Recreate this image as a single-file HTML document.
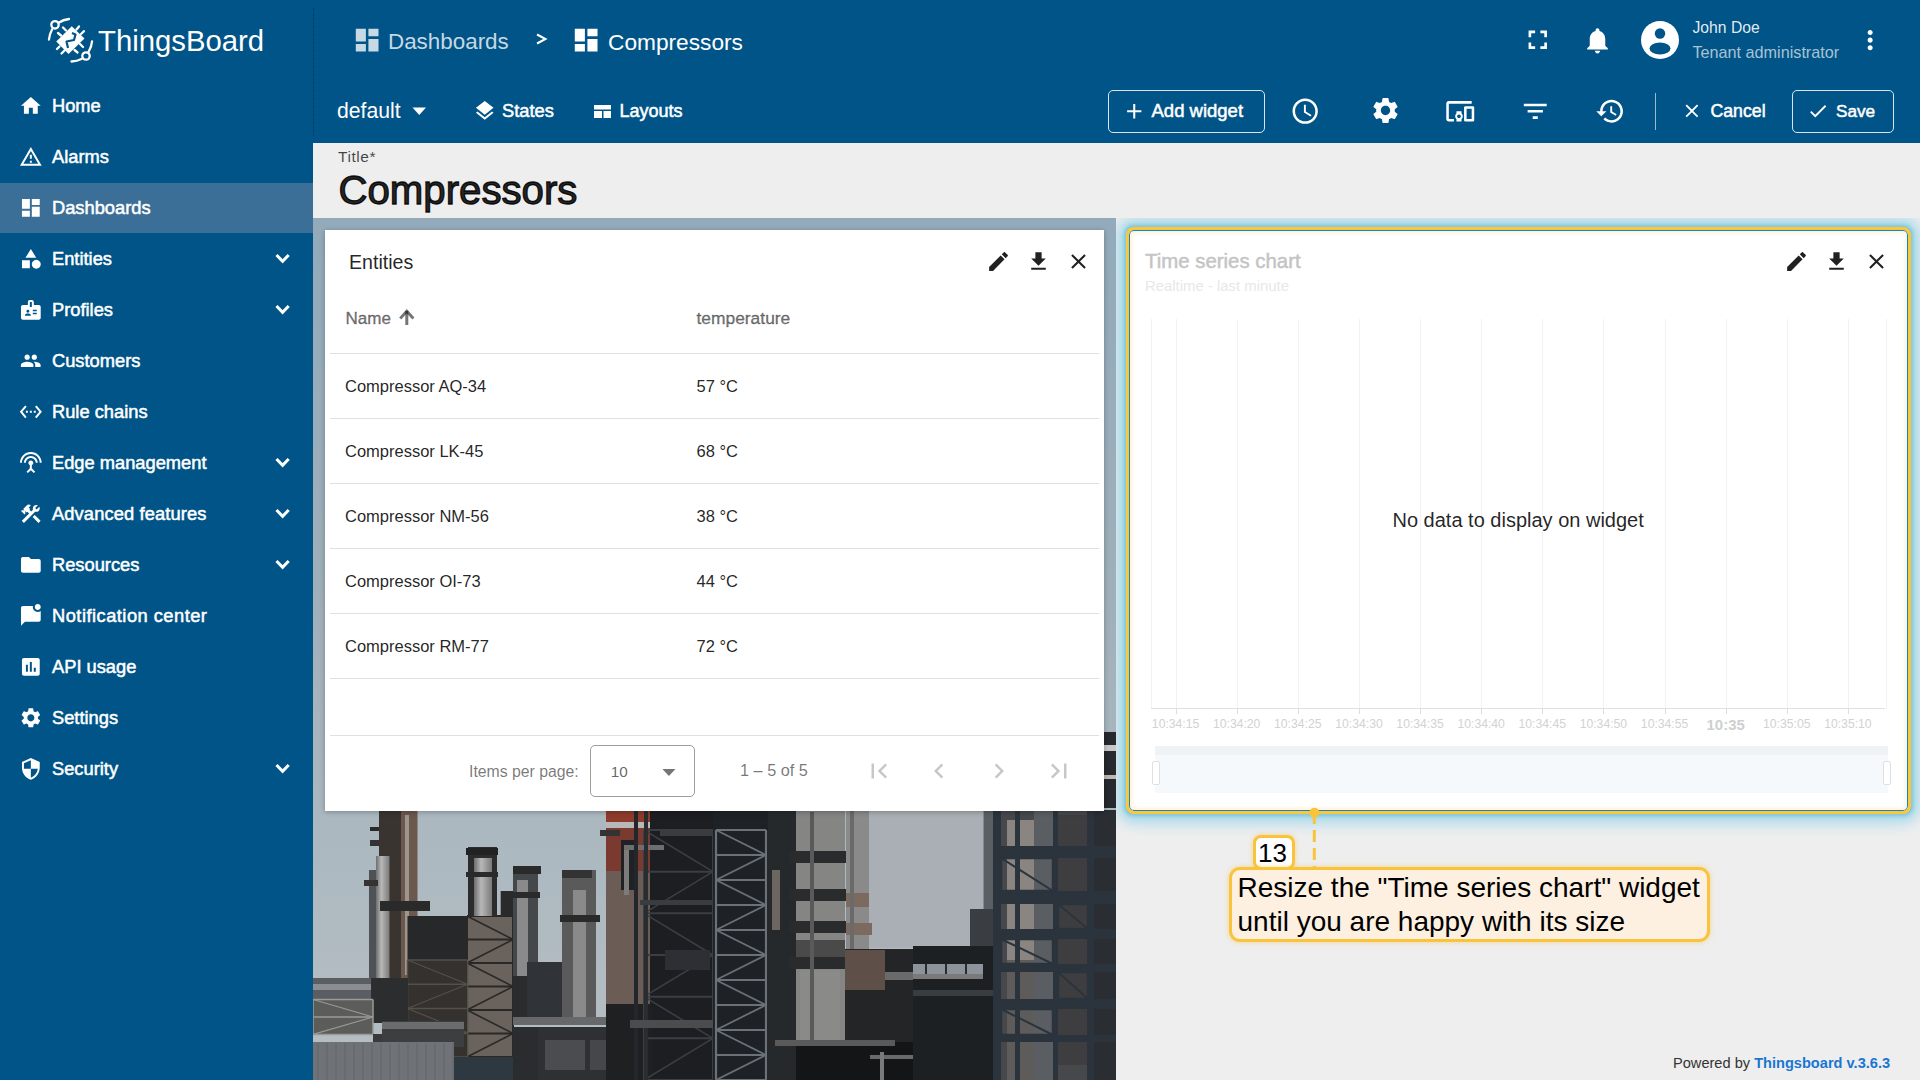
<!DOCTYPE html>
<html><head><meta charset="utf-8"><title>ThingsBoard</title>
<style>
html,body{margin:0;padding:0;width:1920px;height:1080px;overflow:hidden;background:#eee}
body{position:relative;font-family:"Liberation Sans",sans-serif}
.r{position:absolute}
.t{position:absolute;line-height:1;white-space:nowrap}
.i{position:absolute;display:block}
</style></head><body>
<div class="r" style="left:0;top:0;width:1920px;height:143px;background:#015487"></div>
<div class="r" style="left:0;top:143px;width:313px;height:937px;background:#015487"></div>
<div class="r" style="left:313px;top:8px;width:0;height:128px;border-left:1px dotted rgba(0,0,0,0.35)"></div>
<svg class="i" style="left:44px;top:14px;width:54px;height:54px" viewBox="0 0 54 54">
<g fill="none" stroke="#fff" stroke-width="2.3" stroke-linecap="round">
<path d="M25 5 C 21 5.5, 18 6.5, 15 8.5"/><path d="M8 15.5 C 6.5 18.5, 5.2 22, 5 25.5"/>
<path d="M48 27.5 C 47.8 31, 46.5 34.5, 44.5 38"/><path d="M37.5 45 C 34.5 46.5, 31 47.3, 27.5 47.5"/>
<circle cx="11" cy="10.8" r="3.7"/><circle cx="42" cy="42" r="3.7"/>
<path d="M19 13.5 L22 16.5"/><path d="M14 19 L17 21.5"/><path d="M35 12.5 L32.5 15.5"/><path d="M40 17.2 L37 20"/>
<path d="M39 33 L36 30"/><path d="M33.5 38.5 L30.5 36"/><path d="M13 35 L15.5 32.5"/><path d="M17.5 39.5 L20.5 36.5"/>
</g>
<path fill="#fff" d="M27.75 12.25 L40.5 24.5 L24.5 40 L12.25 27.5 Z"/>
<path fill="none" stroke="#015487" stroke-width="2.2" stroke-linejoin="round" d="M28 19 L31.5 20.5 L30 26 L22.5 27.5 L24 34"/>
</svg>
<div class="t " style="left:98.0px;top:25.7px;font-size:29.3px;color:#fff;font-weight:normal;">ThingsBoard</div>
<svg class="i" style="left:352.2px;top:24.9px;width:30.3px;height:30.3px;" viewBox="0 0 24 24"><path fill="rgba(255,255,255,0.78)" d="M3 13h8V3H3v10zm0 8h8v-6H3v6zm10 0h8V11h-8v10zm0-18v6h8V3h-8z"/></svg>
<div class="t " style="left:388.0px;top:31.3px;font-size:22.4px;color:rgba(255,255,255,0.78);font-weight:normal;">Dashboards</div>
<svg class="i" style="left:530px;top:28px;width:22px;height:22px" viewBox="530 28 22 22"><path d="M537 34.5 L545.5 39 L537 43.5" fill="none" stroke="#fff" stroke-width="2"/></svg>
<svg class="i" style="left:571.4px;top:24.9px;width:30.3px;height:30.3px;" viewBox="0 0 24 24"><path fill="#fff" d="M3 13h8V3H3v10zm0 8h8v-6H3v6zm10 0h8V11h-8v10zm0-18v6h8V3h-8z"/></svg>
<div class="t " style="left:608.0px;top:31.1px;font-size:22.7px;color:#fff;font-weight:normal;">Compressors</div>
<div class="t " style="left:337.0px;top:99.6px;font-size:21.2px;color:#fff;font-weight:normal;">default</div>
<svg class="i" style="left:405px;top:100px;width:30px;height:24px" viewBox="405 100 30 24"><path d="M412.5 107.5 L426 107.5 L419.25 115z" fill="#fff"/></svg>
<svg class="i" style="left:473.2px;top:98.8px;width:23.5px;height:23.5px;" viewBox="0 0 24 24"><path fill="#fff" d="M11.99 18.54l-7.37-5.73L3 14.07l9 7 9-7-1.63-1.27-7.38 5.74zM12 16l7.36-5.73L21 9l-9-7-9 7 1.63 1.27L12 16z"/></svg>
<div class="t " style="left:502.0px;top:101.7px;font-size:18.3px;color:#fff;font-weight:normal;-webkit-text-stroke:0.5px #fff">States</div>
<svg class="i" style="left:594px;top:104.5px;width:17px;height:13px" viewBox="0 0 17 13"><path fill="#fff" d="M0 0h17v4.5H0z M0 6h8v7H0z M9.5 6H17v7H9.5z"/></svg>
<div class="t " style="left:619.5px;top:102.0px;font-size:18.0px;color:#fff;font-weight:normal;-webkit-text-stroke:0.5px #fff">Layouts</div>
<div class="r" style="left:1108px;top:89.5px;width:156.7px;height:43.7px;box-sizing:border-box;border:1px solid rgba(255,255,255,0.85);border-radius:5px"></div>
<svg class="i" style="left:1121.7px;top:99.2px;width:24.5px;height:24.5px;" viewBox="0 0 24 24"><path fill="#fff" d="M19 13h-6v6h-2v-6H5v-2h6V5h2v6h6v2z"/></svg>
<div class="t " style="left:1151.5px;top:101.9px;font-size:18.5px;color:#fff;font-weight:normal;-webkit-text-stroke:0.5px #fff">Add widget</div>
<svg class="i" style="left:1289.7px;top:95.6px;width:30.4px;height:30.4px;" viewBox="0 0 24 24"><path fill="#fff" d="M11.99 2C6.47 2 2 6.48 2 12s4.47 10 9.99 10C17.52 22 22 17.52 22 12S17.52 2 11.99 2zM12 20c-4.42 0-8-3.58-8-8s3.58-8 8-8 8 3.58 8 8-3.58 8-8 8zm.5-13H11v6l5.25 3.15.75-1.23-4.5-2.67z"/></svg>
<svg class="i" style="left:1369.5px;top:95.3px;width:31.0px;height:31.0px;" viewBox="0 0 24 24"><path fill="#fff" d="M19.14 12.94c.04-.3.06-.61.06-.94 0-.32-.02-.64-.07-.94l2.03-1.58c.18-.14.23-.41.12-.61l-1.92-3.32c-.12-.22-.37-.29-.59-.22l-2.39.96c-.5-.38-1.03-.7-1.62-.94l-.36-2.54c-.04-.24-.24-.41-.48-.41h-3.84c-.24 0-.43.17-.47.41l-.36 2.54c-.59.24-1.13.57-1.62.94l-2.39-.96c-.22-.08-.47 0-.59.22L2.74 8.87c-.12.21-.08.47.12.61l2.03 1.58c-.05.3-.09.63-.09.94s.02.64.07.94l-2.03 1.58c-.18.14-.23.41-.12.61l1.92 3.32c.12.22.37.29.59.22l2.39-.96c.5.38 1.03.7 1.62.94l.36 2.54c.05.24.24.41.48.41h3.84c.24 0 .44-.17.47-.41l.36-2.54c.59-.24 1.13-.56 1.62-.94l2.39.96c.22.08.47 0 .59-.22l1.92-3.32c.12-.22.07-.47-.12-.61l-2.01-1.58zM12 15.6c-1.98 0-3.6-1.62-3.6-3.6s1.62-3.6 3.6-3.6 3.6 1.62 3.6 3.6-1.62 3.6-3.6 3.6z"/></svg>
<svg class="i" style="left:1444.8px;top:95.8px;width:30.5px;height:30.5px;" viewBox="0 0 24 24"><path fill="#fff" d="M3 6h18V4H3c-1.1 0-2 .9-2 2v12c0 1.1.9 2 2 2h4v-2H3V6zm10 6H9v1.78c-.61.55-1 1.33-1 2.22s.39 1.67 1 2.22V20h4v-1.78c.61-.55 1-1.34 1-2.22s-.39-1.67-1-2.22V12zm-2 5.5c-.83 0-1.5-.67-1.5-1.5s.67-1.5 1.5-1.5 1.5.67 1.5 1.5-.67 1.5-1.5 1.5zM22 8h-6c-.5 0-1 .5-1 1v10c0 .5.5 1 1 1h6c.5 0 1-.5 1-1V9c0-.5-.5-1-1-1zm-1 10h-4v-8h4v8z"/></svg>
<svg class="i" style="left:1519.7px;top:95.5px;width:30.5px;height:30.5px;" viewBox="0 0 24 24"><path fill="#fff" d="M10 18h4v-2h-4v2zM3 6v2h18V6H3zm3 7h12v-2H6v2z"/></svg>
<svg class="i" style="left:1594.5px;top:95.8px;width:30.5px;height:30.5px;" viewBox="0 0 24 24"><path fill="#fff" d="M13 3c-4.97 0-9 4.03-9 9H1l3.89 3.89.07.14L9 12H6c0-3.87 3.13-7 7-7s7 3.13 7 7-3.13 7-7 7c-1.93 0-3.68-.79-4.94-2.06l-1.42 1.42C8.27 19.990 10.51 21 13 21c4.97 0 9-4.03 9-9s-4.03-9-9-9zm-1 5v5l4.28 2.54.72-1.21-3.5-2.08V8H12z"/></svg>
<div class="r" style="left:1655px;top:93px;width:1px;height:37px;background:rgba(255,255,255,0.6)"></div>
<svg class="i" style="left:1681.4px;top:99.6px;width:21.8px;height:21.8px;" viewBox="0 0 24 24"><path fill="#fff" d="M19 6.41L17.59 5 12 10.59 6.41 5 5 6.41 10.59 12 5 17.59 6.41 19 12 13.41 17.59 19 19 17.59 13.41 12z"/></svg>
<div class="t " style="left:1710.5px;top:102.6px;font-size:17.7px;color:#fff;font-weight:normal;-webkit-text-stroke:0.5px #fff">Cancel</div>
<div class="r" style="left:1792.4px;top:89.6px;width:101.9px;height:43.7px;box-sizing:border-box;border:1px solid rgba(255,255,255,0.85);border-radius:5px"></div>
<svg class="i" style="left:1807.0px;top:100.0px;width:22.0px;height:22.0px;" viewBox="0 0 24 24"><path fill="#fff" d="M9 16.17L4.830 12l-1.42 1.41L9 19 21 7l-1.41-1.41z"/></svg>
<div class="t " style="left:1836.0px;top:103.0px;font-size:17.2px;color:#fff;font-weight:normal;-webkit-text-stroke:0.5px #fff">Save</div>
<svg class="i" style="left:1521.5px;top:24.4px;width:31.5px;height:31.5px;" viewBox="0 0 24 24"><path fill="#fff" d="M7 14H5v5h5v-2H7v-3zm-2-4h2V7h3V5H5v5zm12 7h-3v2h5v-5h-2v3zM14 5v2h3v3h2V5h-5z"/></svg>
<svg class="i" style="left:1581.7px;top:24.8px;width:31.0px;height:31.0px;" viewBox="0 0 24 24"><path fill="#fff" d="M12 22c1.1 0 2-.9 2-2h-4c0 1.1.89 2 2 2zm6-6v-5c0-3.07-1.64-5.64-4.5-6.32V4c0-.83-.67-1.5-1.5-1.5s-1.5.67-1.5 1.5v.68C7.63 5.36 6 7.92 6 11v5l-2 2v1h16v-1l-2-2z"/></svg>
<svg class="i" style="left:1641px;top:21.4px;width:38px;height:38px" viewBox="0 0 38 38">
<circle cx="19" cy="19" r="19" fill="#fff"/>
<circle cx="19" cy="12.5" r="5.2" fill="#015487"/>
<ellipse cx="19" cy="27.5" rx="10.5" ry="6" fill="#015487"/>
</svg>
<div class="t " style="left:1692.5px;top:19.9px;font-size:15.7px;color:rgba(255,255,255,0.9);font-weight:normal;">John Doe</div>
<div class="t " style="left:1692.5px;top:43.5px;font-size:16.2px;color:rgba(255,255,255,0.66);font-weight:normal;">Tenant administrator</div>
<svg class="i" style="left:1854.5px;top:25.1px;width:30.3px;height:30.3px;" viewBox="0 0 24 24"><path fill="#fff" d="M12 8c1.1 0 2-.9 2-2s-.9-2-2-2-2 .9-2 2 .9 2 2 2zm0 2c-1.1 0-2 .9-2 2s.9 2 2 2 2-.9 2-2-.9-2-2-2zm0 6c-1.1 0-2 .9-2 2s.9 2 2 2 2-.9 2-2-.9-2-2-2z"/></svg>
<div class="r" style="left:0;top:183px;width:313px;height:50px;background:#3c6f97"></div>
<svg class="i" style="left:19.2px;top:93.6px;width:23.7px;height:23.7px;" viewBox="0 0 24 24"><path fill="#fff" d="M10 20v-6h4v6h5v-8h3L12 3 2 12h3v8z"/></svg>
<div class="t " style="left:52.0px;top:96.5px;font-size:18.3px;color:#fff;font-weight:normal;-webkit-text-stroke:0.5px #fff">Home</div>
<svg class="i" style="left:19.2px;top:144.6px;width:23.7px;height:23.7px;" viewBox="0 0 24 24"><path fill="#fff" d="M12 5.99L19.53 19H4.47L12 5.99M12 2L1 21h22L12 2zm1 14h-2v2h2v-2zm0-6h-2v4h2v-4z"/></svg>
<div class="t " style="left:52.0px;top:147.5px;font-size:18.3px;color:#fff;font-weight:normal;-webkit-text-stroke:0.5px #fff">Alarms</div>
<svg class="i" style="left:19.2px;top:195.6px;width:23.7px;height:23.7px;" viewBox="0 0 24 24"><path fill="#fff" d="M3 13h8V3H3v10zm0 8h8v-6H3v6zm10 0h8V11h-8v10zm0-18v6h8V3h-8z"/></svg>
<div class="t " style="left:52.0px;top:198.5px;font-size:18.3px;color:#fff;font-weight:normal;-webkit-text-stroke:0.5px #fff">Dashboards</div>
<svg class="i" style="left:19.2px;top:246.5px;width:23.7px;height:23.7px;" viewBox="0 0 24 24"><path fill="#fff" d="M12 2l-5.5 9h11z M17.5 13a4.5 4.5 0 1 0 0.001 0z M3 13.5h8v8H3z"/></svg>
<div class="t " style="left:52.0px;top:249.5px;font-size:18.3px;color:#fff;font-weight:normal;-webkit-text-stroke:0.5px #fff">Entities</div>
<svg class="i" style="left:270px;top:245px;width:26px;height:20px" viewBox="0 0 26 20"><path d="M6.5 10 L12.6 16.3 L18.7 10" fill="none" stroke="#fff" stroke-width="3"/></svg>
<svg class="i" style="left:19.2px;top:297.5px;width:23.7px;height:23.7px;" viewBox="0 0 24 24"><path fill="#fff" d="M20 7h-5V4c0-1.1-.9-2-2-2h-2c-1.1 0-2 .9-2 2v3H4c-1.1 0-2 .9-2 2v11c0 1.1.9 2 2 2h16c1.1 0 2-.9 2-2V9c0-1.1-.9-2-2-2zM9 12c.83 0 1.5.67 1.5 1.5S9.830 15 9 15s-1.5-.67-1.5-1.5S8.17 12 9 12zm3 6H6v-.43c0-.6.36-1.15.92-1.39.64-.28 1.34-.43 2.08-.43s1.44.15 2.08.43c.55.24.92.78.92 1.39V18zm1-9h-2V4h2v5zm5 7.5h-4V15h4v1.5zm0-3h-4V12h4v1.5z"/></svg>
<div class="t " style="left:52.0px;top:300.5px;font-size:18.3px;color:#fff;font-weight:normal;-webkit-text-stroke:0.5px #fff">Profiles</div>
<svg class="i" style="left:270px;top:296px;width:26px;height:20px" viewBox="0 0 26 20"><path d="M6.5 10 L12.6 16.3 L18.7 10" fill="none" stroke="#fff" stroke-width="3"/></svg>
<svg class="i" style="left:20.4px;top:349.6px;width:21.5px;height:21.5px;" viewBox="0 0 24 24"><path fill="#fff" d="M16 11c1.66 0 2.99-1.34 2.99-3S17.66 5 16 5c-1.66 0-3 1.34-3 3s1.34 3 3 3zm-8 0c1.66 0 2.99-1.34 2.99-3S9.66 5 8 5C6.34 5 5 6.34 5 8s1.34 3 3 3zm0 2c-2.33 0-7 1.17-7 3.5V19h14v-2.5c0-2.33-4.67-3.5-7-3.5zm8 0c-.29 0-.62.02-.97.05 1.160.84 1.97 1.97 1.97 3.45V19h6v-2.5c0-2.33-4.67-3.5-7-3.5z"/></svg>
<div class="t " style="left:52.0px;top:351.5px;font-size:18.3px;color:#fff;font-weight:normal;-webkit-text-stroke:0.5px #fff">Customers</div>
<svg class="i" style="left:19.2px;top:399.5px;width:23.7px;height:23.7px;" viewBox="0 0 24 24"><path fill="#fff" d="M7.77 6.76L6.23 5.48.82 12l5.41 6.52 1.54-1.28L3.42 12l4.35-5.24zM7 13h2v-2H7v2zm10-2h-2v2h2v-2zm-6 2h2v-2h-2v2zm6.77-7.52l-1.54 1.28L20.58 12l-4.35 5.24 1.54 1.28L23.18 12l-5.41-6.52z"/></svg>
<div class="t " style="left:52.0px;top:402.5px;font-size:18.3px;color:#fff;font-weight:normal;-webkit-text-stroke:0.5px #fff">Rule chains</div>
<svg class="i" style="left:19.2px;top:450.5px;width:23.7px;height:23.7px;" viewBox="0 0 24 24"><path fill="#fff" d="M12 5c-3.87 0-7 3.13-7 7h2c0-2.76 2.24-5 5-5s5 2.24 5 5h2c0-3.87-3.13-7-7-7zm1 9.29c.88-.39 1.5-1.26 1.5-2.29 0-1.38-1.12-2.5-2.5-2.5S9.5 10.62 9.5 12c0 1.020.62 1.9 1.5 2.29v3.3L7.59 21 9 22.41l3-3 3 3L16.41 21 13 17.59v-3.3zM12 1C5.93 1 1 5.93 1 12h2c0-4.97 4.03-9 9-9s9 4.03 9 9h2c0-6.07-4.93-11-11-11z"/></svg>
<div class="t " style="left:52.0px;top:453.5px;font-size:18.3px;color:#fff;font-weight:normal;-webkit-text-stroke:0.5px #fff">Edge management</div>
<svg class="i" style="left:270px;top:449px;width:26px;height:20px" viewBox="0 0 26 20"><path d="M6.5 10 L12.6 16.3 L18.7 10" fill="none" stroke="#fff" stroke-width="3"/></svg>
<svg class="i" style="left:19.2px;top:501.5px;width:23.7px;height:23.7px;" viewBox="0 0 24 24"><path fill="#fff" d="M13.783 15.172l2.121-2.121 5.996 5.996-2.121 2.121zM17.5 10c1.93 0 3.5-1.57 3.5-3.5 0-.58-.16-1.12-.41-1.6l-2.7 2.7-1.49-1.49 2.7-2.7c-.48-.25-1.02-.41-1.6-.41C15.57 3 14 4.57 14 6.5c0 .41.08.8.21 1.16l-1.85 1.85-1.78-1.78.71-.71-1.41-1.41L12 3.49c-1.17-1.17-3.07-1.17-4.24 0L4.22 7.03l1.41 1.41H2.81l-.71.71 3.540 3.54.71-.71V9.15l1.41 1.41.71-.71 1.78 1.78-7.41 7.41 2.12 2.12L16.34 9.79c.36.13.75.21 1.16.21z"/></svg>
<div class="t " style="left:52.0px;top:504.5px;font-size:18.3px;color:#fff;font-weight:normal;-webkit-text-stroke:0.5px #fff;letter-spacing:0.12px">Advanced features</div>
<svg class="i" style="left:270px;top:500px;width:26px;height:20px" viewBox="0 0 26 20"><path d="M6.5 10 L12.6 16.3 L18.7 10" fill="none" stroke="#fff" stroke-width="3"/></svg>
<svg class="i" style="left:19.2px;top:552.5px;width:23.7px;height:23.7px;" viewBox="0 0 24 24"><path fill="#fff" d="M10 4H4c-1.1 0-1.99.9-1.99 2L2 18c0 1.1.9 2 2 2h16c1.1 0 2-.9 2-2V8c0-1.1-.9-2-2-2h-8l-2-2z"/></svg>
<div class="t " style="left:52.0px;top:555.5px;font-size:18.3px;color:#fff;font-weight:normal;-webkit-text-stroke:0.5px #fff">Resources</div>
<svg class="i" style="left:270px;top:551px;width:26px;height:20px" viewBox="0 0 26 20"><path d="M6.5 10 L12.6 16.3 L18.7 10" fill="none" stroke="#fff" stroke-width="3"/></svg>
<svg class="i" style="left:19.2px;top:603.5px;width:23.7px;height:23.7px;" viewBox="0 0 24 24"><path fill="#fff" d="M22 6.98V16c0 1.1-.9 2-2 2H6l-4 4V4c0-1.1.9-2 2-2h10.1c-.06.32-.1.66-.1 1 0 2.76 2.24 5 5 5 1.13 0 2.16-.39 3-1.02zM16 3c0 1.66 1.34 3 3 3s3-1.34 3-3-1.34-3-3-3-3 1.34-3 3z"/></svg>
<div class="t " style="left:52.0px;top:606.5px;font-size:18.3px;color:#fff;font-weight:normal;-webkit-text-stroke:0.5px #fff;letter-spacing:0.48px">Notification center</div>
<svg class="i" style="left:19.2px;top:654.5px;width:23.7px;height:23.7px;" viewBox="0 0 24 24"><path fill="#fff" d="M19 3H5c-1.1 0-2 .9-2 2v14c0 1.1.9 2 2 2h14c1.1 0 2-.9 2-2V5c0-1.1-.9-2-2-2zM9 17H7v-7h2v7zm4 0h-2V7h2v10zm4 0h-2v-4h2v4z"/></svg>
<div class="t " style="left:52.0px;top:657.5px;font-size:18.3px;color:#fff;font-weight:normal;-webkit-text-stroke:0.5px #fff">API usage</div>
<svg class="i" style="left:19.2px;top:705.5px;width:23.7px;height:23.7px;" viewBox="0 0 24 24"><path fill="#fff" d="M19.14 12.94c.04-.3.06-.61.06-.94 0-.32-.02-.64-.07-.94l2.03-1.58c.18-.14.23-.41.12-.61l-1.92-3.32c-.12-.22-.37-.29-.59-.22l-2.39.96c-.5-.38-1.03-.7-1.62-.94l-.36-2.54c-.04-.24-.24-.41-.48-.41h-3.84c-.24 0-.43.17-.47.41l-.36 2.54c-.59.24-1.13.57-1.62.94l-2.39-.96c-.22-.08-.47 0-.59.22L2.74 8.87c-.12.21-.08.47.12.61l2.03 1.58c-.05.3-.09.63-.09.94s.02.64.07.94l-2.03 1.58c-.18.14-.23.41-.12.61l1.92 3.32c.12.22.37.29.59.22l2.39-.96c.5.38 1.03.7 1.62.94l.36 2.54c.05.24.24.41.48.41h3.84c.24 0 .44-.17.47-.41l.36-2.54c.59-.24 1.13-.56 1.62-.94l2.39.96c.22.08.47 0 .59-.22l1.92-3.32c.12-.22.07-.47-.12-.61l-2.01-1.58zM12 15.6c-1.98 0-3.6-1.62-3.6-3.6s1.62-3.6 3.6-3.6 3.6 1.62 3.6 3.6-1.62 3.6-3.6 3.6z"/></svg>
<div class="t " style="left:52.0px;top:708.5px;font-size:18.3px;color:#fff;font-weight:normal;-webkit-text-stroke:0.5px #fff">Settings</div>
<svg class="i" style="left:19.2px;top:756.5px;width:23.7px;height:23.7px;" viewBox="0 0 24 24"><path fill="#fff" d="M12 1L3 5v6c0 5.55 3.84 10.74 9 12 5.16-1.26 9-6.45 9-12V5l-9-4zm0 10.99h7c-.53 4.12-3.28 7.79-7 8.94V12H5V6.3l7-3.11v8.8z"/></svg>
<div class="t " style="left:52.0px;top:759.5px;font-size:18.3px;color:#fff;font-weight:normal;-webkit-text-stroke:0.5px #fff">Security</div>
<svg class="i" style="left:270px;top:755px;width:26px;height:20px" viewBox="0 0 26 20"><path d="M6.5 10 L12.6 16.3 L18.7 10" fill="none" stroke="#fff" stroke-width="3"/></svg>
<div class="r" style="left:313px;top:143px;width:1607px;height:937px;background:#eeeeee"></div>
<div class="t " style="left:338.0px;top:148.9px;font-size:15.5px;color:rgba(0,0,0,0.72);font-weight:normal;letter-spacing:0.55px">Title*</div>
<div class="t " style="left:338.5px;top:171.2px;font-size:40.2px;color:rgba(0,0,0,0.87);font-weight:normal;-webkit-text-stroke:1.3px rgba(0,0,0,0.87)">Compressors</div>
<svg class="i" style="left:313px;top:218px;width:803px;height:862px" viewBox="313 218 803 862"><defs><linearGradient id="sky" x1="0" y1="0" x2="0" y2="1"><stop offset="0" stop-color="#92aaba"/><stop offset="0.45" stop-color="#a0b0ba"/><stop offset="0.7" stop-color="#abb8c0"/><stop offset="1" stop-color="#b6bec2"/></linearGradient><linearGradient id="silver" x1="0" y1="0" x2="1" y2="0"><stop offset="0" stop-color="#6d6d6d"/><stop offset="0.4" stop-color="#b8b8b8"/><stop offset="1" stop-color="#7a7a7a"/></linearGradient></defs>
<rect x="313" y="218" width="803" height="862" fill="url(#sky)" />
<rect x="869" y="808" width="114" height="140" fill="#a9afb4" />
<rect x="379" y="810" width="22" height="174" fill="#3a3430" />
<rect x="401" y="810" width="16.5" height="172" fill="#6b584e" />
<rect x="405" y="815" width="4" height="160" fill="#9e958c" />
<rect x="370" y="827" width="9" height="4" fill="#2a2a2a" />
<rect x="370" y="840" width="9" height="6" fill="#333" />
<rect x="369" y="870" width="8" height="114" fill="#4e5256" />
<rect x="376" y="856" width="13.5" height="161" fill="url(#silver)" />
<rect x="380" y="901" width="50" height="10" fill="#2a2a2a" />
<rect x="364" y="880" width="14" height="6" fill="#333" />
<rect x="407.5" y="916" width="60" height="44" fill="#26282a" />
<rect x="407.5" y="960" width="60" height="97" fill="#34312e" />
<rect x="467" y="916" width="46" height="141" fill="#6a625c" />
<line x1="467" y1="916.0" x2="513" y2="916.0" stroke="#2a2826" stroke-width="2"/>
<line x1="467" y1="939.5" x2="513" y2="939.5" stroke="#2a2826" stroke-width="2"/>
<line x1="467" y1="963.0" x2="513" y2="963.0" stroke="#2a2826" stroke-width="2"/>
<line x1="467" y1="986.5" x2="513" y2="986.5" stroke="#2a2826" stroke-width="2"/>
<line x1="467" y1="1010.0" x2="513" y2="1010.0" stroke="#2a2826" stroke-width="2"/>
<line x1="467" y1="1033.5" x2="513" y2="1033.5" stroke="#2a2826" stroke-width="2"/>
<line x1="467" y1="1057.0" x2="513" y2="1057.0" stroke="#2a2826" stroke-width="2"/>
<line x1="467" y1="916.0" x2="513" y2="939.5" stroke="#2a2826" stroke-width="1.6"/>
<line x1="513" y1="939.5" x2="467" y2="963.0" stroke="#2a2826" stroke-width="1.6"/>
<line x1="467" y1="963.0" x2="513" y2="986.5" stroke="#2a2826" stroke-width="1.6"/>
<line x1="513" y1="986.5" x2="467" y2="1010.0" stroke="#2a2826" stroke-width="1.6"/>
<line x1="467" y1="1010.0" x2="513" y2="1033.5" stroke="#2a2826" stroke-width="1.6"/>
<line x1="513" y1="1033.5" x2="467" y2="1057.0" stroke="#2a2826" stroke-width="1.6"/>
<line x1="467" y1="916" x2="467" y2="1057" stroke="#2a2826" stroke-width="2"/>
<line x1="513" y1="916" x2="513" y2="1057" stroke="#2a2826" stroke-width="2"/>
<line x1="407.5" y1="960.0" x2="467.5" y2="960.0" stroke="#555049" stroke-width="1.5"/>
<line x1="407.5" y1="984.25" x2="467.5" y2="984.25" stroke="#555049" stroke-width="1.5"/>
<line x1="407.5" y1="1008.5" x2="467.5" y2="1008.5" stroke="#555049" stroke-width="1.5"/>
<line x1="407.5" y1="1032.75" x2="467.5" y2="1032.75" stroke="#555049" stroke-width="1.5"/>
<line x1="407.5" y1="1057.0" x2="467.5" y2="1057.0" stroke="#555049" stroke-width="1.5"/>
<line x1="407.5" y1="960.0" x2="467.5" y2="984.25" stroke="#555049" stroke-width="1.2000000000000002"/>
<line x1="467.5" y1="984.25" x2="407.5" y2="1008.5" stroke="#555049" stroke-width="1.2000000000000002"/>
<line x1="407.5" y1="1008.5" x2="467.5" y2="1032.75" stroke="#555049" stroke-width="1.2000000000000002"/>
<line x1="467.5" y1="1032.75" x2="407.5" y2="1057.0" stroke="#555049" stroke-width="1.2000000000000002"/>
<line x1="407.5" y1="960" x2="407.5" y2="1057" stroke="#555049" stroke-width="1.5"/>
<line x1="467.5" y1="960" x2="467.5" y2="1057" stroke="#555049" stroke-width="1.5"/>
<rect x="468" y="847" width="29" height="69" fill="#2c2c2c" />
<rect x="474" y="858" width="18" height="58" fill="url(#silver)" />
<rect x="466" y="848" width="32" height="7" fill="#222" />
<rect x="466" y="872" width="32" height="5" fill="#2a2a2a" />
<rect x="500.7" y="891" width="12.3" height="25" fill="#2a2a2a" />
<rect x="371" y="978" width="37" height="45" fill="#2c2d2e" />
<rect x="313" y="978" width="58" height="21.5" fill="#5a5e62" />
<rect x="313" y="984" width="58" height="6" fill="#8a8e92" />
<rect x="313" y="999.5" width="60" height="35" fill="#5c5c5a" />
<line x1="313" y1="999.5" x2="373" y2="999.5" stroke="#9a9a96" stroke-width="1.5"/>
<line x1="313" y1="1017.0" x2="373" y2="1017.0" stroke="#9a9a96" stroke-width="1.5"/>
<line x1="313" y1="1034.5" x2="373" y2="1034.5" stroke="#9a9a96" stroke-width="1.5"/>
<line x1="313" y1="999.5" x2="373" y2="1017.0" stroke="#9a9a96" stroke-width="1.2000000000000002"/>
<line x1="373" y1="1017.0" x2="313" y2="1034.5" stroke="#9a9a96" stroke-width="1.2000000000000002"/>
<line x1="313" y1="999.5" x2="313" y2="1034.5" stroke="#9a9a96" stroke-width="1.5"/>
<line x1="373" y1="999.5" x2="373" y2="1034.5" stroke="#9a9a96" stroke-width="1.5"/>
<rect x="373" y="1034" width="34" height="10" fill="#3a3a3a" />
<rect x="382" y="1021" width="82" height="26" fill="#3c3e40" />
<rect x="382" y="1022" width="82" height="7" fill="#6a6c6e" />
<rect x="313" y="1042" width="141" height="38" fill="#6f7377" />
<line x1="318" y1="1043" x2="318" y2="1080" stroke="#62666a" stroke-width="1"/>
<line x1="327" y1="1043" x2="327" y2="1080" stroke="#62666a" stroke-width="1"/>
<line x1="336" y1="1043" x2="336" y2="1080" stroke="#62666a" stroke-width="1"/>
<line x1="345" y1="1043" x2="345" y2="1080" stroke="#62666a" stroke-width="1"/>
<line x1="354" y1="1043" x2="354" y2="1080" stroke="#62666a" stroke-width="1"/>
<line x1="363" y1="1043" x2="363" y2="1080" stroke="#62666a" stroke-width="1"/>
<line x1="372" y1="1043" x2="372" y2="1080" stroke="#62666a" stroke-width="1"/>
<line x1="381" y1="1043" x2="381" y2="1080" stroke="#62666a" stroke-width="1"/>
<line x1="390" y1="1043" x2="390" y2="1080" stroke="#62666a" stroke-width="1"/>
<line x1="399" y1="1043" x2="399" y2="1080" stroke="#62666a" stroke-width="1"/>
<line x1="408" y1="1043" x2="408" y2="1080" stroke="#62666a" stroke-width="1"/>
<line x1="417" y1="1043" x2="417" y2="1080" stroke="#62666a" stroke-width="1"/>
<line x1="426" y1="1043" x2="426" y2="1080" stroke="#62666a" stroke-width="1"/>
<line x1="435" y1="1043" x2="435" y2="1080" stroke="#62666a" stroke-width="1"/>
<line x1="444" y1="1043" x2="444" y2="1080" stroke="#62666a" stroke-width="1"/>
<line x1="453" y1="1043" x2="453" y2="1080" stroke="#62666a" stroke-width="1"/>
<rect x="454" y="1057" width="88" height="23" fill="#2e3840" />
<rect x="513" y="866" width="25" height="110" fill="#45484b" />
<rect x="517" y="880" width="11" height="96" fill="#8a8a8a" />
<rect x="513" y="866" width="28" height="8" fill="#2a2a2a" />
<rect x="510" y="892" width="30" height="6" fill="#2a2a2a" />
<rect x="527" y="962" width="41" height="55" fill="#303438" />
<rect x="562" y="870" width="34" height="150" fill="#5a5a5a" />
<rect x="573" y="890" width="13" height="130" fill="#8a8a8a" />
<rect x="560" y="915" width="40" height="7" fill="#2a2a2a" />
<rect x="562" y="870" width="30" height="8" fill="#333" />
<rect x="513" y="1017" width="117" height="8" fill="#66686a" />
<rect x="513" y="976" width="14" height="41" fill="#2a2c2e" />
<rect x="538" y="1027" width="92" height="53" fill="#2e3033" />
<rect x="545" y="1040" width="40" height="30" fill="#4a4c4f" />
<rect x="590" y="1040" width="35" height="30" fill="#45474a" />
<rect x="513" y="1027" width="25" height="53" fill="#2a2c2e" />
<rect x="606" y="810" width="44" height="194" fill="#6b5c55" />
<rect x="606" y="810" width="44" height="12" fill="#8e3b2c" />
<rect x="606" y="822" width="44" height="6" fill="#b8b8b8" />
<rect x="606" y="828" width="44" height="43" fill="#7a3a30" />
<rect x="600" y="830" width="20" height="6" fill="#333" />
<rect x="606" y="1004" width="44" height="76" fill="#1e2022" />
<rect x="650" y="808" width="63" height="272" fill="#1c1e21" />
<rect x="606" y="1004" width="46" height="76" fill="#1e2022" />
<line x1="644" y1="830.0" x2="713" y2="830.0" stroke="#3a3f45" stroke-width="2"/>
<line x1="644" y1="871.6666666666666" x2="713" y2="871.6666666666666" stroke="#3a3f45" stroke-width="2"/>
<line x1="644" y1="913.3333333333334" x2="713" y2="913.3333333333334" stroke="#3a3f45" stroke-width="2"/>
<line x1="644" y1="955.0" x2="713" y2="955.0" stroke="#3a3f45" stroke-width="2"/>
<line x1="644" y1="996.6666666666666" x2="713" y2="996.6666666666666" stroke="#3a3f45" stroke-width="2"/>
<line x1="644" y1="1038.3333333333333" x2="713" y2="1038.3333333333333" stroke="#3a3f45" stroke-width="2"/>
<line x1="644" y1="1080.0" x2="713" y2="1080.0" stroke="#3a3f45" stroke-width="2"/>
<line x1="644" y1="830.0" x2="713" y2="871.6666666666666" stroke="#3a3f45" stroke-width="1.6"/>
<line x1="713" y1="871.6666666666666" x2="644" y2="913.3333333333334" stroke="#3a3f45" stroke-width="1.6"/>
<line x1="644" y1="913.3333333333334" x2="713" y2="955.0" stroke="#3a3f45" stroke-width="1.6"/>
<line x1="713" y1="955.0" x2="644" y2="996.6666666666666" stroke="#3a3f45" stroke-width="1.6"/>
<line x1="644" y1="996.6666666666666" x2="713" y2="1038.3333333333333" stroke="#3a3f45" stroke-width="1.6"/>
<line x1="713" y1="1038.3333333333333" x2="644" y2="1080.0" stroke="#3a3f45" stroke-width="1.6"/>
<line x1="644" y1="830" x2="644" y2="1080" stroke="#3a3f45" stroke-width="2"/>
<line x1="713" y1="830" x2="713" y2="1080" stroke="#3a3f45" stroke-width="2"/>
<rect x="621" y="840" width="15" height="50" fill="#1f2124" />
<rect x="624" y="845" width="5" height="50" fill="#7c7c7c" />
<rect x="624" y="845" width="40" height="5" fill="#6e6e6e" />
<rect x="634" y="808" width="4" height="272" fill="#23262a" />
<rect x="644" y="808" width="4" height="272" fill="#2a2d30" />
<rect x="660" y="830" width="53" height="6" fill="#3a3d40" />
<rect x="640" y="900" width="73" height="5" fill="#3a3d40" />
<rect x="665" y="950" width="45" height="20" fill="#2c2f33" />
<rect x="630" y="1020" width="83" height="8" fill="#4a4c4e" />
<rect x="713" y="808" width="55" height="272" fill="#1e2226" />
<line x1="716" y1="830.0" x2="766" y2="830.0" stroke="#6a7178" stroke-width="2.2"/>
<line x1="716" y1="855.0" x2="766" y2="855.0" stroke="#6a7178" stroke-width="2.2"/>
<line x1="716" y1="880.0" x2="766" y2="880.0" stroke="#6a7178" stroke-width="2.2"/>
<line x1="716" y1="905.0" x2="766" y2="905.0" stroke="#6a7178" stroke-width="2.2"/>
<line x1="716" y1="930.0" x2="766" y2="930.0" stroke="#6a7178" stroke-width="2.2"/>
<line x1="716" y1="955.0" x2="766" y2="955.0" stroke="#6a7178" stroke-width="2.2"/>
<line x1="716" y1="980.0" x2="766" y2="980.0" stroke="#6a7178" stroke-width="2.2"/>
<line x1="716" y1="1005.0" x2="766" y2="1005.0" stroke="#6a7178" stroke-width="2.2"/>
<line x1="716" y1="1030.0" x2="766" y2="1030.0" stroke="#6a7178" stroke-width="2.2"/>
<line x1="716" y1="1055.0" x2="766" y2="1055.0" stroke="#6a7178" stroke-width="2.2"/>
<line x1="716" y1="1080.0" x2="766" y2="1080.0" stroke="#6a7178" stroke-width="2.2"/>
<line x1="716" y1="830.0" x2="766" y2="855.0" stroke="#6a7178" stroke-width="1.7600000000000002"/>
<line x1="766" y1="855.0" x2="716" y2="880.0" stroke="#6a7178" stroke-width="1.7600000000000002"/>
<line x1="716" y1="880.0" x2="766" y2="905.0" stroke="#6a7178" stroke-width="1.7600000000000002"/>
<line x1="766" y1="905.0" x2="716" y2="930.0" stroke="#6a7178" stroke-width="1.7600000000000002"/>
<line x1="716" y1="930.0" x2="766" y2="955.0" stroke="#6a7178" stroke-width="1.7600000000000002"/>
<line x1="766" y1="955.0" x2="716" y2="980.0" stroke="#6a7178" stroke-width="1.7600000000000002"/>
<line x1="716" y1="980.0" x2="766" y2="1005.0" stroke="#6a7178" stroke-width="1.7600000000000002"/>
<line x1="766" y1="1005.0" x2="716" y2="1030.0" stroke="#6a7178" stroke-width="1.7600000000000002"/>
<line x1="716" y1="1030.0" x2="766" y2="1055.0" stroke="#6a7178" stroke-width="1.7600000000000002"/>
<line x1="766" y1="1055.0" x2="716" y2="1080.0" stroke="#6a7178" stroke-width="1.7600000000000002"/>
<line x1="716" y1="830" x2="716" y2="1080" stroke="#6a7178" stroke-width="2.2"/>
<line x1="766" y1="830" x2="766" y2="1080" stroke="#6a7178" stroke-width="2.2"/>
<rect x="768" y="808" width="28" height="272" fill="#26292c" />
<rect x="772" y="870" width="8" height="60" fill="#6c6660" />
<rect x="796" y="810" width="49" height="232" fill="#858583" />
<rect x="800" y="970" width="40" height="72" fill="#8a8a88" />
<rect x="796" y="940" width="49" height="28" fill="#4a4a4a" />
<rect x="790" y="851" width="60" height="12" fill="#2a2b2d" />
<rect x="790" y="889" width="60" height="12" fill="#2a2b2d" />
<rect x="790" y="921" width="60" height="12" fill="#2a2b2d" />
<rect x="790" y="957" width="60" height="12" fill="#2a2b2d" />
<rect x="810" y="812" width="4" height="228" fill="#5a5a5a" />
<rect x="846" y="810" width="23" height="139" fill="#8a8a8a" />
<rect x="846" y="893" width="23" height="14" fill="#7c6a60" />
<rect x="846" y="923" width="26" height="12" fill="#7c6a60" />
<rect x="850" y="810" width="4" height="140" fill="#6a6a6a" />
<rect x="845" y="949" width="68" height="131" fill="#232527" />
<rect x="852" y="972" width="61" height="8" fill="#6a6a6a" />
<rect x="796" y="1042" width="117" height="38" fill="#141516" />
<rect x="845" y="950" width="40" height="40" fill="#5e5048" />
<rect x="870" y="1055" width="60" height="4" fill="#6a6a6a" />
<rect x="880" y="1052" width="4" height="28" fill="#7a7a7a" />
<rect x="775" y="1040" width="120" height="6" fill="#5a5a5a" />
<rect x="913" y="946" width="80" height="134" fill="#1d2023" />
<rect x="913" y="964" width="70" height="10" fill="#8c939a" />
<rect x="913" y="974" width="70" height="5" fill="#7a7a7a" />
<rect x="925" y="964" width="2" height="10" fill="#2a2d30" />
<rect x="945" y="964" width="2" height="10" fill="#2a2d30" />
<rect x="965" y="964" width="2" height="10" fill="#2a2d30" />
<rect x="913" y="990" width="80" height="6" fill="#3a3d40" />
<rect x="983.5" y="810" width="12.5" height="99" fill="#5a5f63" />
<rect x="970" y="909" width="26" height="37" fill="#3a3e42" />
<rect x="1001" y="810" width="88" height="270" fill="#46484c" />
<rect x="1007" y="820" width="27" height="140" fill="#8a8580" />
<rect x="1007" y="960" width="27" height="120" fill="#5e5c5a" />
<rect x="1034" y="810" width="19" height="270" fill="#5a5d61" />
<rect x="1058" y="815" width="29" height="250" fill="#3e3e40" />
<rect x="1089" y="810" width="27" height="270" fill="#2a2e33" />
<rect x="993" y="808" width="8" height="272" fill="#2b343c" />
<rect x="1015" y="808" width="5" height="272" fill="#2b343c" />
<rect x="1053" y="808" width="5" height="272" fill="#2b343c" />
<rect x="1087" y="808" width="7" height="272" fill="#2b343c" />
<rect x="993" y="846" width="123" height="12" fill="#2b343c" />
<rect x="993" y="891" width="123" height="13" fill="#2b343c" />
<rect x="993" y="929" width="123" height="10" fill="#2b343c" />
<rect x="993" y="964" width="123" height="8" fill="#2b343c" />
<rect x="993" y="999" width="123" height="10" fill="#2b343c" />
<rect x="993" y="1035" width="123" height="7" fill="#2b343c" />
<line x1="1001" y1="858.0" x2="1053" y2="858.0" stroke="#2b343c" stroke-width="2.5"/>
<line x1="1001" y1="891.0" x2="1053" y2="891.0" stroke="#2b343c" stroke-width="2.5"/>
<line x1="1001" y1="858.0" x2="1053" y2="891.0" stroke="#2b343c" stroke-width="2.0"/>
<line x1="1001" y1="858" x2="1001" y2="891" stroke="#2b343c" stroke-width="2.5"/>
<line x1="1053" y1="858" x2="1053" y2="891" stroke="#2b343c" stroke-width="2.5"/>
<line x1="1001" y1="939.0" x2="1053" y2="939.0" stroke="#2b343c" stroke-width="2.5"/>
<line x1="1001" y1="964.0" x2="1053" y2="964.0" stroke="#2b343c" stroke-width="2.5"/>
<line x1="1001" y1="939.0" x2="1053" y2="964.0" stroke="#2b343c" stroke-width="2.0"/>
<line x1="1001" y1="939" x2="1001" y2="964" stroke="#2b343c" stroke-width="2.5"/>
<line x1="1053" y1="939" x2="1053" y2="964" stroke="#2b343c" stroke-width="2.5"/>
<line x1="1001" y1="1009.0" x2="1053" y2="1009.0" stroke="#2b343c" stroke-width="2.5"/>
<line x1="1001" y1="1035.0" x2="1053" y2="1035.0" stroke="#2b343c" stroke-width="2.5"/>
<line x1="1001" y1="1009.0" x2="1053" y2="1035.0" stroke="#2b343c" stroke-width="2.0"/>
<line x1="1001" y1="1009" x2="1001" y2="1035" stroke="#2b343c" stroke-width="2.5"/>
<line x1="1053" y1="1009" x2="1053" y2="1035" stroke="#2b343c" stroke-width="2.5"/>
<line x1="1058" y1="904.0" x2="1088" y2="904.0" stroke="#2b343c" stroke-width="2.5"/>
<line x1="1058" y1="929.0" x2="1088" y2="929.0" stroke="#2b343c" stroke-width="2.5"/>
<line x1="1058" y1="904.0" x2="1088" y2="929.0" stroke="#2b343c" stroke-width="2.0"/>
<line x1="1058" y1="904" x2="1058" y2="929" stroke="#2b343c" stroke-width="2.5"/>
<line x1="1088" y1="904" x2="1088" y2="929" stroke="#2b343c" stroke-width="2.5"/>
<line x1="1058" y1="972.0" x2="1088" y2="972.0" stroke="#2b343c" stroke-width="2.5"/>
<line x1="1058" y1="999.0" x2="1088" y2="999.0" stroke="#2b343c" stroke-width="2.5"/>
<line x1="1058" y1="972.0" x2="1088" y2="999.0" stroke="#2b343c" stroke-width="2.0"/>
<line x1="1058" y1="972" x2="1058" y2="999" stroke="#2b343c" stroke-width="2.5"/>
<line x1="1088" y1="972" x2="1088" y2="999" stroke="#2b343c" stroke-width="2.5"/>
<rect x="1104" y="732" width="12" height="76" fill="#26292d" />
<rect x="1104" y="745" width="12" height="6" fill="#c8c8c8" />
<rect x="1104" y="775" width="12" height="4" fill="#c0b8b0" /></svg>
<div class="r" style="left:325px;top:230px;width:779px;height:580.5px;background:#fff;box-shadow:0 1px 5px rgba(0,0,0,0.28)"></div>
<div class="t " style="left:349.0px;top:253.0px;font-size:19.6px;color:rgba(0,0,0,0.87);font-weight:normal;">Entities</div>
<svg class="i" style="left:986.3px;top:248.9px;width:25.0px;height:25.0px;" viewBox="0 0 24 24"><path fill="rgba(0,0,0,0.87)" d="M3 17.25V21h3.75L17.81 9.94l-3.75-3.75L3 17.25zM20.71 7.04c.39-.39.39-1.02 0-1.41l-2.34-2.34c-.39-.39-1.02-.39-1.41 0l-1.83 1.83 3.75 3.75 1.83-1.83z"/></svg>
<svg class="i" style="left:1026.2px;top:248.9px;width:25.0px;height:25.0px;" viewBox="0 0 24 24"><path fill="rgba(0,0,0,0.87)" d="M19 9h-4V3H9v6H5l7 7 7-7zM5 18v2h14v-2H5z"/></svg>
<svg class="i" style="left:1066.2px;top:248.9px;width:25.0px;height:25.0px;" viewBox="0 0 24 24"><path fill="rgba(0,0,0,0.87)" d="M19 6.41L17.59 5 12 10.59 6.41 5 5 6.41 10.59 12 5 17.59 6.41 19 12 13.41 17.59 19 19 17.59 13.41 12z"/></svg>
<div class="t " style="left:345.5px;top:310.1px;font-size:17.0px;color:rgba(0,0,0,0.54);font-weight:normal;-webkit-text-stroke:0.4px rgba(0,0,0,0.54)">Name</div>
<svg class="i" style="left:398px;top:309px;width:18px;height:18px" viewBox="398 309 18 18"><path d="M406.8 311 V325" stroke="rgba(0,0,0,0.54)" stroke-width="3"/><path d="M400.2 318.5 L406.8 311.2 L413.4 318.5" fill="none" stroke="rgba(0,0,0,0.54)" stroke-width="2.8"/></svg>
<div class="t " style="left:696.5px;top:309.8px;font-size:17.4px;color:rgba(0,0,0,0.54);font-weight:normal;-webkit-text-stroke:0.4px rgba(0,0,0,0.54)">temperature</div>
<div class="r" style="left:330px;top:353px;width:769px;height:1px;background:#e0e0e0"></div>
<div class="t " style="left:345.0px;top:377.7px;font-size:16.5px;color:rgba(0,0,0,0.87);font-weight:normal;">Compressor AQ-34</div>
<div class="t " style="left:696.5px;top:377.7px;font-size:16.5px;color:rgba(0,0,0,0.87);font-weight:normal;">57 °C</div>
<div class="r" style="left:330px;top:418px;width:769px;height:1px;background:#e0e0e0"></div>
<div class="t " style="left:345.0px;top:442.7px;font-size:16.5px;color:rgba(0,0,0,0.87);font-weight:normal;">Compressor LK-45</div>
<div class="t " style="left:696.5px;top:442.7px;font-size:16.5px;color:rgba(0,0,0,0.87);font-weight:normal;">68 °C</div>
<div class="r" style="left:330px;top:483px;width:769px;height:1px;background:#e0e0e0"></div>
<div class="t " style="left:345.0px;top:507.7px;font-size:16.5px;color:rgba(0,0,0,0.87);font-weight:normal;">Compressor NM-56</div>
<div class="t " style="left:696.5px;top:507.7px;font-size:16.5px;color:rgba(0,0,0,0.87);font-weight:normal;">38 °C</div>
<div class="r" style="left:330px;top:548px;width:769px;height:1px;background:#e0e0e0"></div>
<div class="t " style="left:345.0px;top:572.7px;font-size:16.5px;color:rgba(0,0,0,0.87);font-weight:normal;">Compressor OI-73</div>
<div class="t " style="left:696.5px;top:572.7px;font-size:16.5px;color:rgba(0,0,0,0.87);font-weight:normal;">44 °C</div>
<div class="r" style="left:330px;top:613px;width:769px;height:1px;background:#e0e0e0"></div>
<div class="t " style="left:345.0px;top:637.7px;font-size:16.5px;color:rgba(0,0,0,0.87);font-weight:normal;">Compressor RM-77</div>
<div class="t " style="left:696.5px;top:637.7px;font-size:16.5px;color:rgba(0,0,0,0.87);font-weight:normal;">72 °C</div>
<div class="r" style="left:330px;top:678px;width:769px;height:1px;background:#e0e0e0"></div>
<div class="r" style="left:330px;top:735px;width:769px;height:1px;background:#e0e0e0"></div>
<div class="t " style="left:469.0px;top:764.3px;font-size:15.8px;color:rgba(0,0,0,0.54);font-weight:normal;">Items per page:</div>
<div class="r" style="left:590.3px;top:745.3px;width:104.4px;height:51.3px;box-sizing:border-box;border:1.3px solid rgba(0,0,0,0.38);border-radius:5px"></div>
<div class="t " style="left:610.8px;top:764.0px;font-size:15.3px;color:rgba(0,0,0,0.62);font-weight:normal;">10</div>
<svg class="i" style="left:655px;top:760px;width:30px;height:24px" viewBox="655 760 30 24"><path d="M662.4 768.9 L675.5 768.9 L668.95 776z" fill="rgba(0,0,0,0.54)"/></svg>
<div class="t " style="left:740.0px;top:761.8px;font-size:16.3px;color:rgba(0,0,0,0.54);font-weight:normal;">1 – 5 of 5</div>
<svg class="i" style="left:864.1px;top:756.0px;width:30.0px;height:30.0px;" viewBox="0 0 24 24"><path fill="rgba(0,0,0,0.22)" d="M18.41 16.59L13.82 12l4.59-4.59L17 6l-6 6 6 6zM6 6h2v12H6z"/></svg>
<svg class="i" style="left:923.8px;top:756.0px;width:30.0px;height:30.0px;" viewBox="0 0 24 24"><path fill="rgba(0,0,0,0.22)" d="M15.41 7.41L14 6l-6 6 6 6 1.41-1.41L10.83 12z"/></svg>
<svg class="i" style="left:984.0px;top:756.0px;width:30.0px;height:30.0px;" viewBox="0 0 24 24"><path fill="rgba(0,0,0,0.22)" d="M10 6L8.59 7.41 13.17 12l-4.58 4.59L10 18l6-6z"/></svg>
<svg class="i" style="left:1043.8px;top:756.0px;width:30.0px;height:30.0px;" viewBox="0 0 24 24"><path fill="rgba(0,0,0,0.22)" d="M5.59 7.41L10.18 12l-4.59 4.59L7 18l6-6-6-6zM16 6h2v12h-2z"/></svg>
<div class="r" style="left:1116px;top:218px;width:804px;height:862px;overflow:hidden"><div class="r" style="left:10.3px;top:9px;width:784.5px;height:587px;box-sizing:border-box;border:3.5px solid #fbc63a;border-radius:8px;background:#fff;box-shadow:0 0 0 1.5px #8ccadb, 0 0 3px 3px #94cfe0, 0 0 14px 9px #a6d9ea, inset 0 0 0 1px #0f86c6, inset 0 0 4px 3px #fff1dc"></div></div>
<div class="t " style="left:1145.0px;top:250.9px;font-size:20.4px;color:#c4c4c4;font-weight:normal;-webkit-text-stroke:0.45px #c4c4c4">Time series chart</div>
<div class="t " style="left:1145.0px;top:278.8px;font-size:14.9px;color:#e8e8e8;font-weight:normal;">Realtime - last minute</div>
<svg class="i" style="left:1783.8px;top:249.2px;width:25.0px;height:25.0px;" viewBox="0 0 24 24"><path fill="rgba(0,0,0,0.87)" d="M3 17.25V21h3.75L17.81 9.94l-3.75-3.75L3 17.25zM20.71 7.04c.39-.39.39-1.02 0-1.41l-2.34-2.34c-.39-.39-1.02-.39-1.41 0l-1.83 1.83 3.75 3.75 1.83-1.83z"/></svg>
<svg class="i" style="left:1823.7px;top:249.2px;width:25.0px;height:25.0px;" viewBox="0 0 24 24"><path fill="rgba(0,0,0,0.87)" d="M19 9h-4V3H9v6H5l7 7 7-7zM5 18v2h14v-2H5z"/></svg>
<svg class="i" style="left:1863.8px;top:249.2px;width:25.0px;height:25.0px;" viewBox="0 0 24 24"><path fill="rgba(0,0,0,0.87)" d="M19 6.41L17.59 5 12 10.59 6.41 5 5 6.41 10.59 12 5 17.59 6.41 19 12 13.41 17.59 19 19 17.59 13.41 12z"/></svg>
<div class="r" style="left:1151.4px;top:319px;width:1px;height:390px;background:#f1f2f6"></div><div class="r" style="left:1175.6px;top:319px;width:1px;height:390px;background:#f1f2f6"></div><div class="r" style="left:1236.7px;top:319px;width:1px;height:390px;background:#f1f2f6"></div><div class="r" style="left:1297.8px;top:319px;width:1px;height:390px;background:#f1f2f6"></div><div class="r" style="left:1359.0px;top:319px;width:1px;height:390px;background:#f1f2f6"></div><div class="r" style="left:1420.1px;top:319px;width:1px;height:390px;background:#f1f2f6"></div><div class="r" style="left:1481.2px;top:319px;width:1px;height:390px;background:#f1f2f6"></div><div class="r" style="left:1542.3px;top:319px;width:1px;height:390px;background:#f1f2f6"></div><div class="r" style="left:1603.4px;top:319px;width:1px;height:390px;background:#f1f2f6"></div><div class="r" style="left:1664.6px;top:319px;width:1px;height:390px;background:#f1f2f6"></div><div class="r" style="left:1725.7px;top:319px;width:1px;height:390px;background:#f1f2f6"></div><div class="r" style="left:1786.8px;top:319px;width:1px;height:390px;background:#f1f2f6"></div><div class="r" style="left:1847.9px;top:319px;width:1px;height:390px;background:#f1f2f6"></div><div class="r" style="left:1885.5px;top:319px;width:1px;height:390px;background:#f1f2f6"></div>
<div class="r" style="left:1151px;top:708px;width:734px;height:1px;background:#e0e0e0"></div>
<div class="r" style="left:1175.6px;top:709px;width:1px;height:5px;background:#dcdcdc"></div>
<div class="t" style="left:1135.6px;width:80px;text-align:center;top:717.5px;font-size:12.2px;color:#d2d2d2">10:34:15</div>
<div class="r" style="left:1236.7px;top:709px;width:1px;height:5px;background:#dcdcdc"></div>
<div class="t" style="left:1196.7px;width:80px;text-align:center;top:717.5px;font-size:12.2px;color:#d2d2d2">10:34:20</div>
<div class="r" style="left:1297.8px;top:709px;width:1px;height:5px;background:#dcdcdc"></div>
<div class="t" style="left:1257.8px;width:80px;text-align:center;top:717.5px;font-size:12.2px;color:#d2d2d2">10:34:25</div>
<div class="r" style="left:1359.0px;top:709px;width:1px;height:5px;background:#dcdcdc"></div>
<div class="t" style="left:1319.0px;width:80px;text-align:center;top:717.5px;font-size:12.2px;color:#d2d2d2">10:34:30</div>
<div class="r" style="left:1420.1px;top:709px;width:1px;height:5px;background:#dcdcdc"></div>
<div class="t" style="left:1380.1px;width:80px;text-align:center;top:717.5px;font-size:12.2px;color:#d2d2d2">10:34:35</div>
<div class="r" style="left:1481.2px;top:709px;width:1px;height:5px;background:#dcdcdc"></div>
<div class="t" style="left:1441.2px;width:80px;text-align:center;top:717.5px;font-size:12.2px;color:#d2d2d2">10:34:40</div>
<div class="r" style="left:1542.3px;top:709px;width:1px;height:5px;background:#dcdcdc"></div>
<div class="t" style="left:1502.3px;width:80px;text-align:center;top:717.5px;font-size:12.2px;color:#d2d2d2">10:34:45</div>
<div class="r" style="left:1603.4px;top:709px;width:1px;height:5px;background:#dcdcdc"></div>
<div class="t" style="left:1563.4px;width:80px;text-align:center;top:717.5px;font-size:12.2px;color:#d2d2d2">10:34:50</div>
<div class="r" style="left:1664.6px;top:709px;width:1px;height:5px;background:#dcdcdc"></div>
<div class="t" style="left:1624.6px;width:80px;text-align:center;top:717.5px;font-size:12.2px;color:#d2d2d2">10:34:55</div>
<div class="r" style="left:1725.7px;top:709px;width:1px;height:5px;background:#dcdcdc"></div>
<div class="t" style="left:1685.7px;width:80px;text-align:center;top:716.8px;font-size:15px;color:#cfcfcf;font-weight:bold">10:35</div>
<div class="r" style="left:1786.8px;top:709px;width:1px;height:5px;background:#dcdcdc"></div>
<div class="t" style="left:1746.8px;width:80px;text-align:center;top:717.5px;font-size:12.2px;color:#d2d2d2">10:35:05</div>
<div class="r" style="left:1847.9px;top:709px;width:1px;height:5px;background:#dcdcdc"></div>
<div class="t" style="left:1807.9px;width:80px;text-align:center;top:717.5px;font-size:12.2px;color:#d2d2d2">10:35:10</div>
<div class="t " style="left:1392.5px;top:509.8px;font-size:20.0px;color:rgba(0,0,0,0.87);font-weight:normal;">No data to display on widget</div>
<div class="r" style="left:1155px;top:745.5px;width:733px;height:46px;background:#f6f9fc;border-top:1px solid #eef1f4"></div>
<div class="r" style="left:1155px;top:746px;width:733px;height:9px;background:#f0f3f6"></div>
<div class="r" style="left:1152px;top:760.6px;width:7.5px;height:24px;box-sizing:border-box;background:#fff;border:1px solid #dde1e6;border-radius:2px"></div>
<div class="r" style="left:1883px;top:760.6px;width:7.5px;height:24px;box-sizing:border-box;background:#fff;border:1px solid #dde1e6;border-radius:2px"></div>
<svg class="i" style="left:1300px;top:800px;width:30px;height:75px" viewBox="1300 800 30 75"><circle cx="1314.4" cy="812.8" r="5" fill="#f9c33c"/><path d="M1314.3 812 V868" stroke="#f9c33c" stroke-width="3" stroke-dasharray="12,6"/></svg>
<div class="r" style="left:1253.3px;top:835.4px;width:41.7px;height:34.7px;box-sizing:border-box;border:3px solid #f9c33c;border-radius:8px;background:#fff;box-shadow:0 0 5px rgba(249,190,60,0.55)"></div>
<div class="t " style="left:1258.0px;top:840.0px;font-size:26.0px;color:#000;font-weight:normal;">13</div>
<div class="r" style="left:1229.4px;top:867px;width:481px;height:75.4px;box-sizing:border-box;border:3px solid #f9c33c;border-radius:11px;background:#fdf0e0;box-shadow:0 0 5px rgba(249,190,60,0.55)"></div>
<div class="t " style="left:1237.5px;top:874.2px;font-size:28.0px;color:#000;font-weight:normal;">Resize the "Time series chart" widget</div>
<div class="t " style="left:1237.5px;top:907.6px;font-size:28.0px;color:#000;font-weight:normal;">until you are happy with its size</div>
<div class="t " style="left:1673.0px;top:1056.3px;font-size:14.6px;color:#333;font-weight:normal;">Powered by <b style="color:#1976d2">Thingsboard v.3.6.3</b></div>
</body></html>
